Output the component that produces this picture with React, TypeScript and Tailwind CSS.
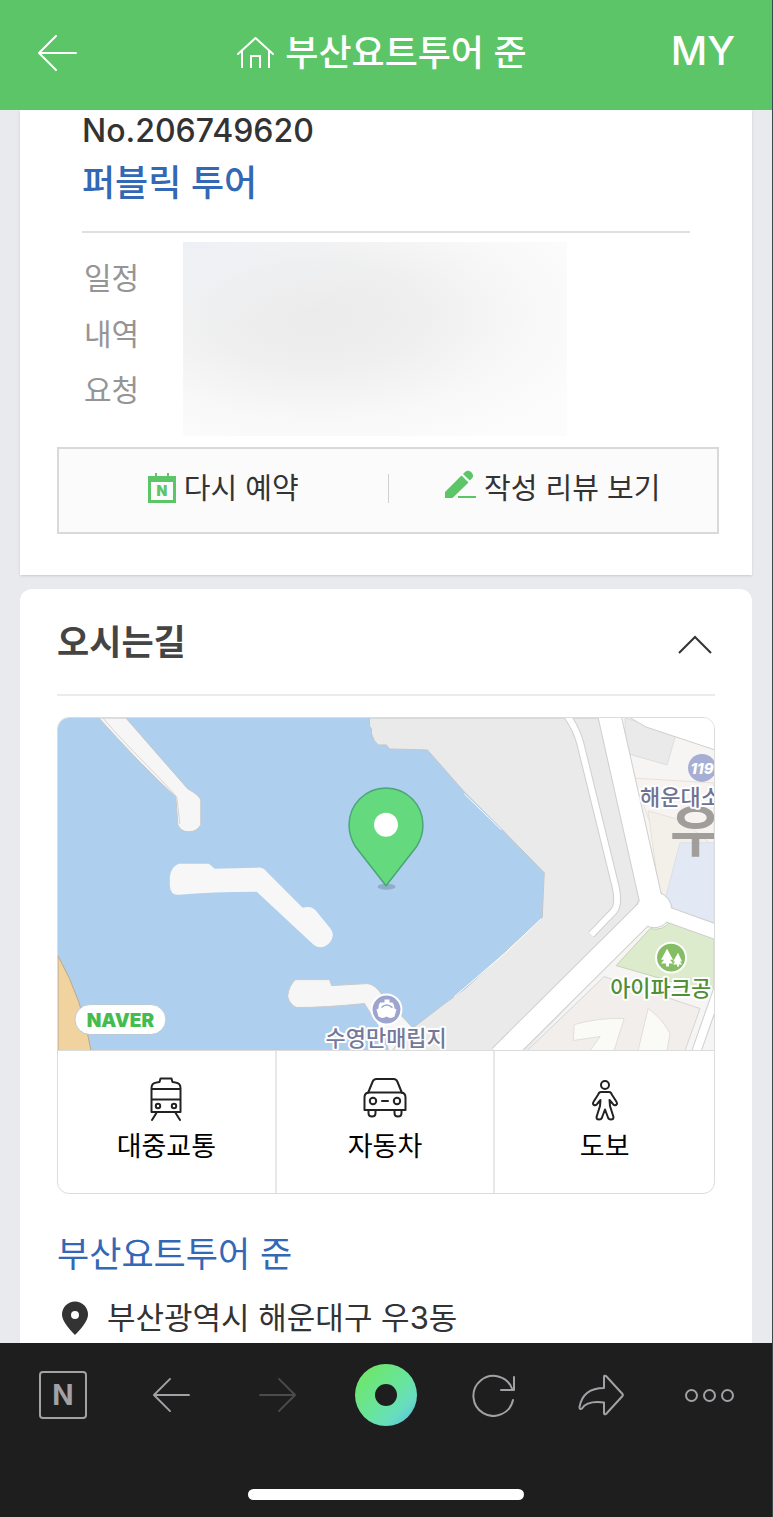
import React from 'react';

interface IconProps {
  className?: string;
}

const HomeIcon: React.FC<IconProps> = ({ className }) => (
  <svg viewBox="0 0 38 34" className={className} fill="none" stroke="currentColor" strokeWidth="2">
    <path d="M1 18 18.500 2 36 18" strokeLinejoin="round" strokeLinecap="round" />
    <path d="M5 15v17M32 15v17M14 32V20h9v12" />
  </svg>
);

const ArrowLeftIcon: React.FC<IconProps> = ({ className }) => (
  <svg viewBox="0 0 40 38" className={className} fill="none" stroke="currentColor" strokeWidth="2" strokeLinecap="round" strokeLinejoin="round">
    <path d="M39 19H2M19 2 2 19l17 17" />
  </svg>
);

const CalendarIcon: React.FC<IconProps> = ({ className }) => (
  <svg viewBox="0 0 28 31" className={className}>
    <path fill="#5bc567" fillRule="evenodd" d="M0 3h7V0h2v3h10V0h2v3h7v27H0zM3 9v18h22V9z" />
    <text x="14" y="23" textAnchor="middle" fontSize="14" fontWeight="900" fill="#5bc567">N</text>
  </svg>
);

const PencilIcon: React.FC<IconProps> = ({ className }) => (
  <svg viewBox="0 0 31 30" className={className} fill="#5bc567">
    <path d="M0 28v-6L16.500 5.500l7 7L7.500 28z" />
    <path d="m18 4 2-2c2-2 4.500-1.500 6.300.2s2.500 4.300.5 6.300l-2 2z" />
    <path d="M13 26h18v2H13z" />
  </svg>
);

const TrainIcon: React.FC<IconProps> = ({ className }) => (
  <svg viewBox="0 0 32 44" className={className} fill="none" stroke="#222" strokeWidth="2" strokeLinecap="round" strokeLinejoin="round">
    <path d="M1.500 35V11q0-5 5-5.500l3-.5 1-3.500h11L22.500 5l3 .5q5 .5 5 5.500v24zM1.500 12h29M1.500 22.500h29" />
    <circle cx="8" cy="29" r="2.200" />
    <circle cx="24" cy="29" r="2.200" />
    <path d="m7 35-5 8M25 35l5 8" />
  </svg>
);

const CarIcon: React.FC<IconProps> = ({ className }) => (
  <svg viewBox="0 0 44 44" className={className} fill="none" stroke="#222" strokeWidth="2" strokeLinecap="round" strokeLinejoin="round">
    <path d="m5 16 4.500-11q1-3 4-3h17q3 0 4 3L39 16M5 15.500h34q3.500 1 3.500 5V33h-41V20.500q0-4 3.500-5z" />
    <circle cx="10" cy="24" r="3.200" />
    <circle cx="34" cy="24" r="3.200" />
    <path d="M19 24h6M5.500 33v3q0 3.500 3.500 3.500t3.500-3.500v-3M31.500 33v3q0 3.500 3.500 3.500t3.500-3.500v-3" />
  </svg>
);

const WalkIcon: React.FC<IconProps> = ({ className }) => (
  <svg viewBox="0 0 28 44" className={className} fill="none" stroke="#222" strokeWidth="2" strokeLinecap="round" strokeLinejoin="round">
    <circle cx="14" cy="8" r="4" />
    <path d="M10 15q-2 0-2.800 2.500L3 24q-2 3 0 4t3.500-1.500L9.500 23 9 29 5.500 40q0 2.500 2.500 2.500t3-2l3-8 3 8q.5 2 3 2t2.500-2.500L19 29l-.5-6 3 3.500q1.500 2.500 3.500 1.500t0-4l-4.200-6.500Q20 15 18 15z" />
  </svg>
);

const RefreshIcon: React.FC<IconProps> = ({ className }) => (
  <svg viewBox="0 0 44 44" className={className} fill="none" stroke="currentColor" strokeWidth="2" strokeLinecap="round" strokeLinejoin="round">
    <path d="M41 27A20 20 0 1 1 40 15.500M42 4v13H29" />
  </svg>
);

const ShareIcon: React.FC<IconProps> = ({ className }) => (
  <svg viewBox="0 0 46 42" className={className} fill="none" stroke="currentColor" strokeWidth="2" strokeLinecap="round" strokeLinejoin="round">
    <path d="M26 14V3q0-2 2-1l16.500 18q.8 1 0 2L28 40q-2 1-2-1V28.500q-17-2-22 6Q1.500 36 1.500 33 5 14 26 14z" />
  </svg>
);

const MapView: React.FC = () => (
  <svg viewBox="57 717 657 333" className="block w-full" role="img" aria-label="오시는길 지도">
    <rect x="57" y="717" width="657" height="333" fill="#aed0ee" />

    {/* Sand and piers */}
    <path d="M57 955Q82 1000 90 1050H57z" fill="#f1d3a0" stroke="#b9a98c" />
    <path d="M97 717h28l34 39 28 32q11 6 13 11v25q-4 7-12 7t-11-7l-2-28q-35-32-77-79z" fill="#f6f6f6" stroke="#c5c7c9" />
    <path d="M102 717c29 34 52 54 74 79l3 27" fill="none" stroke="#d4d4d4" />
    <path d="M178 863h30l6 5 42-1q6-1 10 4l36 36q10-3 15 5l13 16q5 7-1 14-8 8-16 2l-57-53q-45 0-78 3-8 1-9-9v-9q1-10 9-13z" fill="#f7f7f8" />
    <path d="M295 979h34l2 6 36-2q8 1 15 12l30 32-2 23h-22l-3-13-21-34q-40 4-68 4-7-3-9-11 1-11 8-17z" fill="#f6f6f6" stroke="#c9c9cb" />

    {/* Land */}
    <path d="M369 717v8q3 2 2 8l3 7 4 4h8l3 4 38 1 37 42 37 37 43 44-2 45-23 21-54 50-22 16-30 23-11 9-10 14h324V717z" fill="#eaeaea" stroke="#c4c6c8" />
    <path d="m464 793 37 36M541 918l-37 35-50 43" fill="none" stroke="#fff" />

    {/* City blocks */}
    <path d="M620 717h94v333H526l124-130z" fill="#f6f5f4" />
    <path d="m625 717 51 16-9 31-42-12z" fill="#eaeaea" stroke="#ddd" />
    <path d="m630 777 84 5v76h-51l-20-55z" fill="#f6f3f0" stroke="#e7e1dc" />
    <path d="m648 810 35 10 30 25v90l-51-22z" fill="#f3f0ea" stroke="#e8e2d7" />
    <path d="M680 842h34v90l-53-18z" fill="#e3e9f4" stroke="#d8dfea" />
    <path d="m604 976 96 32-15 42H527z" fill="#f1eeec" stroke="#d8d4d0" />
    <path d="M574 1024q24-7 50-6l-10 32h-24l10-14-27 4zM648 1008q14 10 22 25l-3 17h-29z" fill="#fafaf7" stroke="#e3dfd5" />
    <path d="m616 965 34-37q13 3 21-8l43 16v51q-15 2-25-1z" fill="#dcebcc" stroke="#c3d3b4" />

    {/* Roads: grey outline first, white fill over it */}
    <g fill="none" stroke="#cfcfcf">
      <path d="M606 700 652 905 500 1056" strokeWidth="24" strokeLinejoin="round" />
      <path d="m654 909 70 25" strokeWidth="16" />
      <path d="M565 712q11 15 15 30l34 138q6 22 0 30l-23 24" strokeWidth="8" />
      <path d="m718 989-22 63" strokeWidth="10" />
      <circle cx="654" cy="909" r="18" />
    </g>
    <path d="M622 712h96v38l-72-24z" fill="#fff" stroke="#cfcfcf" />
    <g fill="none" stroke="#fff">
      <path d="M606 700 652 905 500 1056" strokeWidth="22" strokeLinejoin="round" />
      <path d="m654 909 70 25" strokeWidth="14" />
      <path d="M565 712q11 15 15 30l34 138q6 22 0 30l-23 24" strokeWidth="6" />
      <path d="m718 989-22 63" strokeWidth="8" />
    </g>
    <circle cx="654" cy="909" r="17" fill="#fff" />

    {/* Area names */}
    <text x="670" y="850" fontSize="56" fontWeight="700" fill="#a09d9b">우</text>
    <g fontSize="22" fontWeight="500" paintOrder="stroke" stroke="#fff" strokeWidth="4" strokeLinejoin="round">
      <text x="640" y="804" fill="#6f7393">해운대소</text>
      <text x="610" y="995" fill="#4f8f35">아이파크공</text>
      <text x="325" y="1046" fill="#74789b">수영만매립지</text>
    </g>
    <circle cx="702" cy="767" r="14" fill="#a7aed3" />
    <text x="702" y="773" textAnchor="middle" fontSize="15" fontWeight="800" fontStyle="italic" fill="#fff">119</text>
    <circle cx="671" cy="957" r="15" fill="#84bd63" stroke="#fff" strokeWidth="2" />
    <path d="m667 948-6 11h3l-3 4h5v3h3v-3h4l-3-4h3zM678 952l-5 9h2l-2 3h4v2h2v-2h3l-2-3h2z" fill="#fff" />
    <circle cx="386" cy="1009" r="15" fill="#9da5cf" stroke="#fff" strokeWidth="2" />
    <path d="M384 999h5v3h3q2 2 2 6l2 1-2 7q-4 3-8 0-4 3-8 0l-2-7 2-1q0-5 2-6h4z" fill="#fff" />
    <path d="M381 1007q5-5 11 0" fill="none" stroke="#9da5cf" strokeWidth="1.500" />

    {/* Pin */}
    <ellipse cx="386" cy="886" rx="9" ry="3" fill="#6f87a3" opacity=".5" />
    <path d="M385.500 885 355 846Q348.500 836 348.500 824a37 37 0 0 1 74 0q0 12-6.500 22z" fill="#64d97d" stroke="#4aa577" strokeWidth="1.500" />
    <circle cx="385.500" cy="824" r="12" fill="#fff" />

    {/* Logo */}
    <rect x="74" y="1004" width="91" height="30" rx="15" fill="#fff" stroke="#b8c9da" />
    <text x="119.500" y="1026" textAnchor="middle" fontSize="19" fontWeight="900" fill="#45bd4e">NAVER</text>
  </svg>
);

const transports = [
  { label: '대중교통', icon: <TrainIcon className="h-11 w-8" /> },
  { label: '자동차', icon: <CarIcon className="h-11 w-11" /> },
  { label: '도보', icon: <WalkIcon className="h-11 w-7" /> },
];

const details = ['일정', '내역', '요청'];

const App: React.FC = () => {
  return (
    <div className="flex h-screen flex-col border-r border-[#3d484c] bg-[#e9eaee] font-['Inter','Noto_Sans_CJK_KR',sans-serif] text-[#333]">
      <header className="grid h-[110px] shrink-0 grid-cols-[1fr_auto_1fr] items-center bg-[#5bc567] px-[37px] pb-1 text-white">
        <button type="button" aria-label="뒤로">
          <ArrowLeftIcon className="h-[38px] w-10" />
        </button>
        <a href="#home" className="flex items-center gap-[10px] pr-2">
          <HomeIcon className="h-[34px] w-[38px]" />
          <span className="text-[36px] leading-[48px] font-medium">부산요트투어 준</span>
        </a>
        <a href="#my" className="justify-self-end pb-1 text-[40px] leading-[48px] font-medium">MY</a>
      </header>

      <main className="min-h-0 flex-1 overflow-hidden px-5">
        {/* Booking summary */}
        <section className="bg-white pr-[33px] pb-[41px] pl-[37px] shadow">
          <div className="pr-[29px] pl-[25px]">
            <p className="text-[32px] leading-[42px] font-medium">No.206749620</p>
            <h1 className="border-b-2 border-[#dfdfdf] pt-[6px] pb-[23px] text-[36px] leading-[50px] font-medium text-[#3268b5]">
              퍼블릭 투어
            </h1>
            <dl className="flex h-[214px] items-start pt-[9px]">
              <div className="w-[101px] shrink-0 pt-2 pl-[2px] text-[30px] leading-[56px] text-[#959595]">
                {details.map((item) => (
                  <dt key={item}>{item}</dt>
                ))}
              </div>
              <dd className="h-[194px] w-full max-w-[384px] bg-[radial-gradient(ellipse_at_0%_0%,#edf0f4_0%,#edf0f400_35%),radial-gradient(ellipse_at_35%_38%,#ebebeb_0%,#efefef_30%,#f8f8f8_60%,#fcfcfc_85%)]" />
            </dl>
          </div>
          <div className="flex h-[87px] items-center border-2 border-[#d9d9db] bg-[#fbfbfb] pb-1 text-[29px] leading-[40px]">
            <a href="#rebook" className="flex flex-1 items-center justify-center gap-2">
              <CalendarIcon className="h-[31px] w-7" />
              다시 예약
            </a>
            <span className="h-[29px] w-px bg-[#d0d0d0]" />
            <a href="#review" className="flex flex-1 items-center justify-center gap-2">
              <PencilIcon className="mb-2 h-[30px] w-[31px]" />
              작성 리뷰 보기
            </a>
          </div>
        </section>

        {/* Directions */}
        <section className="mt-[14px] rounded-t-xl bg-white px-[37px] pb-10">
          <div className="flex h-[107px] items-center justify-between border-b-2 border-[#ebebeb]">
            <h2 className="text-[35px] leading-[48px] font-bold text-[#444]">오시는길</h2>
            <button type="button" aria-label="접기" className="pt-[6px] pr-[2px]">
              <svg viewBox="0 0 36 20" className="h-5 w-9" fill="none" stroke="#333" strokeWidth="2">
                <path d="m2 18 16-16 16 16" />
              </svg>
            </button>
          </div>

          <div className="mt-[21px] overflow-hidden rounded-xl border border-[#dcdcdc]">
            <MapView />
            <div className="grid grid-cols-3 divide-x-2 divide-[#e8e8e8] border-t border-[#dcdcdc]">
              {transports.map((item) => (
                <a key={item.label} href="#route" className="flex h-[142px] flex-col items-center pt-[26px] text-[27px] leading-[40px] text-black">
                  {item.icon}
                  <span className="pt-[6px]">{item.label}</span>
                </a>
              ))}
            </div>
          </div>

          <h3 className="pt-9 text-[35px] leading-[48px] font-normal text-[#3268b5]">부산요트투어 준</h3>
          <address className="flex items-center gap-[18px] pt-[18px] pl-1 text-[31px] leading-[44px] not-italic">
            <svg viewBox="0 0 28 34" className="h-[34px] w-7 shrink-0">
              <path fill="#333" fillRule="evenodd" d="M14 34Q1 21 1 13.500a13 13 0 0 1 26 0Q27 21 14 34zM14 10a4 4 0 1 0 0 8 4 4 0 0 0 0-8z" />
            </svg>
            부산광역시 해운대구 우3동
          </address>
        </section>
      </main>

      {/* Browser toolbar */}
      <footer className="flex shrink-0 flex-col items-center bg-[#1e1e1e] pt-[21px] pb-[17px] text-[#a1a1a6]">
        <nav className="grid w-full grid-cols-7 items-center justify-items-center px-[9px]">
          <button type="button" aria-label="네이버 홈" className="flex size-12 items-center justify-center rounded border-2 border-current text-[28px] leading-[28px] font-bold">
            N
          </button>
          <button type="button" aria-label="이전">
            <ArrowLeftIcon className="h-9 w-[38px]" />
          </button>
          <button type="button" aria-label="다음" className="text-[#4b4b4d]">
            <ArrowLeftIcon className="h-9 w-[38px] rotate-180" />
          </button>
          <button type="button" aria-label="그린닷" className="flex size-[62px] items-center justify-center rounded-full bg-[linear-gradient(135deg,#6ee668_10%,#69e4a0_55%,#67dcc0_75%,#5bbbe6_95%)]">
            <span className="size-[22px] rounded-full bg-[#1e1e1e]" />
          </button>
          <button type="button" aria-label="새로고침">
            <RefreshIcon className="size-11" />
          </button>
          <button type="button" aria-label="공유">
            <ShareIcon className="h-[42px] w-[46px]" />
          </button>
          <button type="button" aria-label="더보기" className="flex gap-[5px]">
            <span className="size-[13px] rounded-full border-2 border-current" />
            <span className="size-[13px] rounded-full border-2 border-current" />
            <span className="size-[13px] rounded-full border-2 border-current" />
          </button>
        </nav>
        <div className="mt-[63px] h-[11px] w-[276px] rounded-full bg-white" />
      </footer>
    </div>
  );
};

export default App;
